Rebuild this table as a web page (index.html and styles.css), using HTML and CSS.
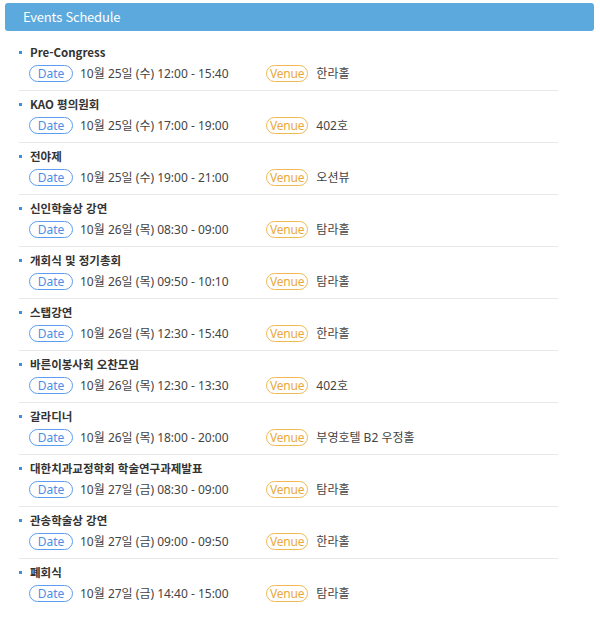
FILE: index.html
```html
<!DOCTYPE html>
<html lang="ko">
<head>
<meta charset="utf-8">
<title>Events Schedule</title>
<link rel="stylesheet" href="styles.css">
</head>
<body>
<div class="page">
  <div class="header">Events Schedule</div>
  <ul class="events">
    <li class="event"><div class="title">Pre-Congress</div><div class="info"><div class="when"><span class="badge date">Date</span><span>10월 25일 (수) 12:00 - 15:40</span></div><div class="where"><span class="badge venue">Venue</span><span>한라홀</span></div></div></li>
    <li class="event"><div class="title">KAO 평의원회</div><div class="info"><div class="when"><span class="badge date">Date</span><span>10월 25일 (수) 17:00 - 19:00</span></div><div class="where"><span class="badge venue">Venue</span><span>402호</span></div></div></li>
    <li class="event"><div class="title">전야제</div><div class="info"><div class="when"><span class="badge date">Date</span><span>10월 25일 (수) 19:00 - 21:00</span></div><div class="where"><span class="badge venue">Venue</span><span>오션뷰</span></div></div></li>
    <li class="event"><div class="title">신인학술상 강연</div><div class="info"><div class="when"><span class="badge date">Date</span><span>10월 26일 (목) 08:30 - 09:00</span></div><div class="where"><span class="badge venue">Venue</span><span>탐라홀</span></div></div></li>
    <li class="event"><div class="title">개회식 및 정기총회</div><div class="info"><div class="when"><span class="badge date">Date</span><span>10월 26일 (목) 09:50 - 10:10</span></div><div class="where"><span class="badge venue">Venue</span><span>탐라홀</span></div></div></li>
    <li class="event"><div class="title">스탭강연</div><div class="info"><div class="when"><span class="badge date">Date</span><span>10월 26일 (목) 12:30 - 15:40</span></div><div class="where"><span class="badge venue">Venue</span><span>한라홀</span></div></div></li>
    <li class="event"><div class="title">바른이봉사회 오찬모임</div><div class="info"><div class="when"><span class="badge date">Date</span><span>10월 26일 (목) 12:30 - 13:30</span></div><div class="where"><span class="badge venue">Venue</span><span>402호</span></div></div></li>
    <li class="event"><div class="title">갈라디너</div><div class="info"><div class="when"><span class="badge date">Date</span><span>10월 26일 (목) 18:00 - 20:00</span></div><div class="where"><span class="badge venue">Venue</span><span>부영호텔 B2 우정홀</span></div></div></li>
    <li class="event"><div class="title">대한치과교정학회 학술연구과제발표</div><div class="info"><div class="when"><span class="badge date">Date</span><span>10월 27일 (금) 08:30 - 09:00</span></div><div class="where"><span class="badge venue">Venue</span><span>탐라홀</span></div></div></li>
    <li class="event"><div class="title">관송학술상 강연</div><div class="info"><div class="when"><span class="badge date">Date</span><span>10월 27일 (금) 09:00 - 09:50</span></div><div class="where"><span class="badge venue">Venue</span><span>한라홀</span></div></div></li>
    <li class="event last"><div class="title">폐회식</div><div class="info"><div class="when"><span class="badge date">Date</span><span>10월 27일 (금) 14:40 - 15:00</span></div><div class="where"><span class="badge venue">Venue</span><span>탐라홀</span></div></div></li>
  </ul>
</div>
</body>
</html>
```
FILE: styles.css
```css
html, body {
  margin: 0;
  padding: 0;
  background: #ffffff;
}
body {
  font-family: "Noto Sans", "Noto Sans CJK KR", sans-serif;
  color: #333333;
  font-size: 12px;
}
.page {
  padding: 3px 6px 0 5px;
}
.header {
  height: 28px;
  line-height: 28px;
  background: #5ba9dd;
  border-radius: 3px;
  color: #ffffff;
  font-family: "Noto Sans CJK KR", "Noto Sans", sans-serif;
  font-size: 13px;
  letter-spacing: -0.2px;
  padding-left: 18px;
}
.events {
  list-style: none;
  margin: 8px 0 0 0;
  padding: 0 0 0 14px;
  width: 539px;
}
.event {
  padding: 4px 0 8px 0;
  border-bottom: 1px solid #e8e8e8;
  display: flex;
  flex-direction: column;
  gap: 3px;
}
.event.last {
  border-bottom-color: transparent;
}
.title {
  position: relative;
  height: 18px;
  line-height: 18px;
  padding-left: 11px;
  font-family: "Noto Sans CJK KR", "Noto Sans", sans-serif;
  font-size: 11.5px;
  font-weight: bold;
  color: #333333;
}
.title::before {
  content: "";
  position: absolute;
  left: 0;
  top: 8px;
  width: 3px;
  height: 3px;
  background: #3b8fe0;
}
.info {
  display: flex;
  align-items: center;
  height: 18px;
  padding-left: 10px;
  color: #444444;
}
.when {
  width: 237px;
  display: flex;
  align-items: center;
  gap: 7px;
}
.where {
  display: flex;
  align-items: center;
  gap: 8px;
}
.badge {
  display: inline-block;
  height: 15px;
  line-height: 15px;
  padding: 0 6px;
  border-radius: 9px;
  font-size: 12px;
}
.badge.date {
  border: 1px solid #5c9df0;
  color: #4d8ee6;
  width: 30px;
  text-align: center;
}
.badge.venue {
  border: 1px solid #f0b954;
  color: #e9a83e;
  padding: 0 3px;
  letter-spacing: -0.2px;
}
```
